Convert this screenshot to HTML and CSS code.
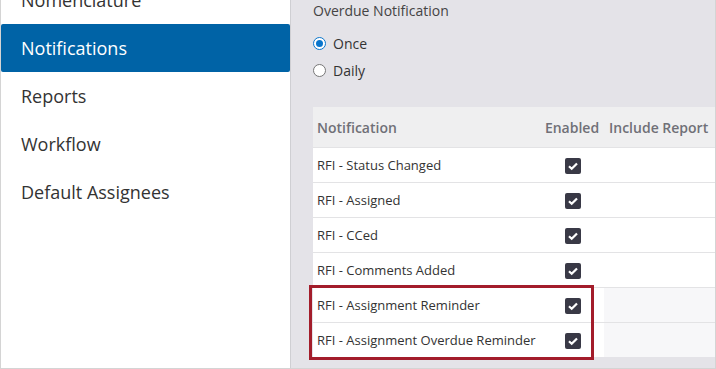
FILE: index.html
```html
<!DOCTYPE html>
<html lang="en">

<head>
	<meta charset="UTF-8" />
	<meta name="viewport" content="width=device-width, initial-scale=1.0" />
	<title>Notification Settings</title>
	<link rel="stylesheet" href="styles.css">
</head>

<body>
	<div class="frame">
		<div class="sidebar">
			<ul class="menu">
				<li class="menu-item">Nomenclature</li>
				<li class="menu-item active">Notifications</li>
				<li class="menu-item">Reports</li>
				<li class="menu-item">Workflow</li>
				<li class="menu-item">Default Assignees</li>
			</ul>
		</div>
		<div class="content">
			<p class="section-title">Overdue Notification</p>
			<div class="radio-row">
				<span class="radio checked"></span>
				<span class="radio-label">Once</span>
			</div>
			<div class="radio-row">
				<span class="radio"></span>
				<span class="radio-label">Daily</span>
			</div>
			<div class="table-wrap">
				<table class="notif-table">
					<thead>
						<tr>
							<th class="col-name">Notification</th>
							<th class="col-enabled">Enabled</th>
							<th class="col-report">Include Report</th>
						</tr>
					</thead>
					<tbody>
						<tr>
							<td>RFI - Status Changed</td>
							<td class="col-enabled"><span class="check"><svg viewBox="0 0 16 16" width="16" height="16"><path d="M4 8.2l2.7 2.6L12 5.4" fill="none" stroke="#fff" stroke-width="2.2" /></svg></span></td>
							<td></td>
						</tr>
						<tr>
							<td>RFI - Assigned</td>
							<td class="col-enabled"><span class="check"><svg viewBox="0 0 16 16" width="16" height="16"><path d="M4 8.2l2.7 2.6L12 5.4" fill="none" stroke="#fff" stroke-width="2.2" /></svg></span></td>
							<td></td>
						</tr>
						<tr>
							<td>RFI - CCed</td>
							<td class="col-enabled"><span class="check"><svg viewBox="0 0 16 16" width="16" height="16"><path d="M4 8.2l2.7 2.6L12 5.4" fill="none" stroke="#fff" stroke-width="2.2" /></svg></span></td>
							<td></td>
						</tr>
						<tr>
							<td>RFI - Comments Added</td>
							<td class="col-enabled"><span class="check"><svg viewBox="0 0 16 16" width="16" height="16"><path d="M4 8.2l2.7 2.6L12 5.4" fill="none" stroke="#fff" stroke-width="2.2" /></svg></span></td>
							<td></td>
						</tr>
						<tr class="dim">
							<td>RFI - Assignment Reminder</td>
							<td class="col-enabled"><span class="check"><svg viewBox="0 0 16 16" width="16" height="16"><path d="M4 8.2l2.7 2.6L12 5.4" fill="none" stroke="#fff" stroke-width="2.2" /></svg></span></td>
							<td></td>
						</tr>
						<tr class="dim">
							<td>RFI - Assignment Overdue Reminder</td>
							<td class="col-enabled"><span class="check"><svg viewBox="0 0 16 16" width="16" height="16"><path d="M4 8.2l2.7 2.6L12 5.4" fill="none" stroke="#fff" stroke-width="2.2" /></svg></span></td>
							<td></td>
						</tr>
					</tbody>
				</table>
				<div class="highlight"></div>
			</div>
		</div>
	</div>
</body>

</html>
```

FILE: styles.css
```css
body {
	margin: 0;
	font-family: 'Open Sans', 'Liberation Sans', sans-serif;
	background-color: #fff;
}

.frame {
	width: 714px;
	height: 368px;
	display: flex;
	border: 1px solid #d4d4d4;
	border-top: none;
	overflow: hidden;
}

.sidebar {
	width: 289px;
	flex-shrink: 0;
	background-color: #fff;
	border-right: 1px solid #cfcfd3;
	overflow: hidden;
}

.menu {
	list-style: none;
	margin: -24px 0 0 0;
	padding: 0;
}

.menu-item {
	height: 48px;
	line-height: 48px;
	padding-left: 20px;
	font-size: 18px;
	color: #333;
}

.menu-item.active {
	background-color: #0063a6;
	color: #fff;
	border-radius: 2px;
}

.content {
	flex: 1;
	background-color: #e4e3e8;
	padding-left: 22px;
	overflow: hidden;
}

.section-title {
	margin: 1px 0 0 0;
	font-size: 14px;
	line-height: 20px;
	color: #444;
}

.radio-row {
	display: flex;
	align-items: center;
	gap: 7px;
	height: 27px;
}

.radio-row:first-of-type {
	margin-top: 9px;
}

.radio {
	width: 11px;
	height: 11px;
	border: 1px solid #777;
	border-radius: 50%;
	background-color: #fff;
	position: relative;
}

.radio.checked {
	border-color: #0a76cc;
}

.radio.checked::after {
	content: '';
	position: absolute;
	left: 2px;
	top: 2px;
	width: 7px;
	height: 7px;
	border-radius: 50%;
	background-color: #0a76cc;
}

.radio-label {
	font-size: 14px;
	color: #333;
}

.table-wrap {
	position: relative;
	margin-top: 23px;
	width: 420px;
}

.notif-table {
	border-collapse: collapse;
	width: 420px;
	font-size: 13px;
	color: #333;
}

.notif-table th {
	height: 40px;
	padding: 0;
	background-color: #efeff0;
	font-weight: 600;
	font-size: 14px;
	color: #707077;
	text-align: left;
}

.notif-table .col-name {
	padding-left: 4px;
	width: 223px;
}

.notif-table th.col-enabled {
	width: 64px;
	text-align: center;
}

.notif-table th.col-report {
	padding-left: 5px;
}

.notif-table td {
	height: 34px;
	padding: 0 0 0 4px;
	background-color: #fff;
	border-top: 1px solid #e3e3e5;
}

.notif-table td.col-enabled {
	padding: 0;
	text-align: center;
}

.notif-table tr.dim td:last-child {
	background-color: #f7f7f9;
}

.check {
	display: inline-block;
	width: 16px;
	height: 16px;
	border-radius: 2px;
	background-color: #393946;
	vertical-align: middle;
	margin-top: -1px;
	margin-left: 2px;
}

.check svg {
	display: block;
}

.highlight {
	position: absolute;
	left: -4px;
	top: 178px;
	width: 279px;
	height: 69px;
	border: 3px solid #a31d2b;
}
```
